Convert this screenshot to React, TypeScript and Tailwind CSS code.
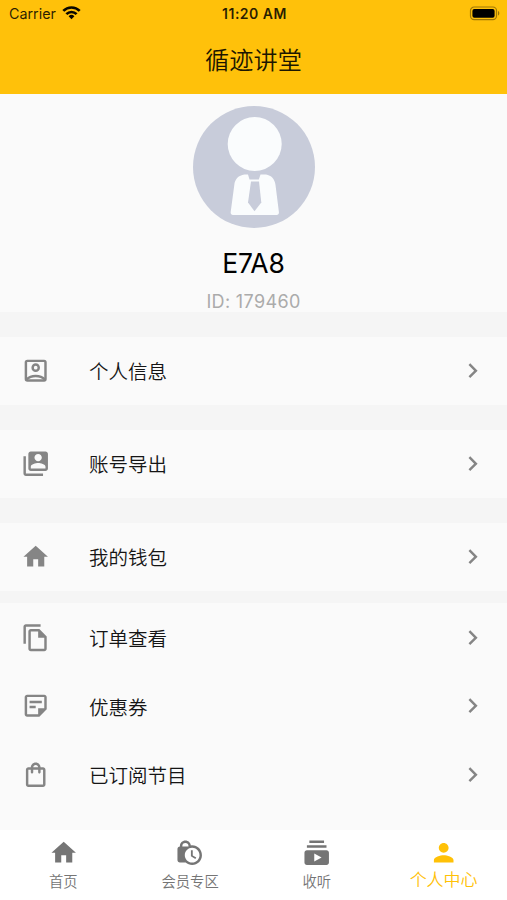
import type { ComponentType } from "react";
import {
  MdChevronRight,
  MdHome,
  MdLockClock,
  MdOutlineFileCopy,
  MdOutlineShoppingBag,
  MdOutlineStickyNote2,
  MdPerson,
  MdSubscriptions,
  MdSwitchAccount,
} from "react-icons/md";

type IconProps = { size?: number; color?: string };
type Item = { label: string; icon: ComponentType<IconProps> };

function ProfileBox({ size = 24, color = "currentColor" }: IconProps) {
  return (
    <svg width={size} height={size} viewBox="0 0 24 24" fill="none" stroke={color} strokeWidth="2">
      <rect x="4" y="4" width="16" height="16" rx="1.2" />
      <circle cx="12" cy="9.5" r="2.500" />
      <path d="M4.500 19.200C6.300 17.300 9 16.300 12 16.300s5.700 1 7.500 2.900" />
    </svg>
  );
}

const groups: { items: Item[]; gap: string }[] = [
  { gap: "h-[24.5px]", items: [{ label: "个人信息", icon: ProfileBox }] },
  { gap: "h-[24.5px]", items: [{ label: "账号导出", icon: MdSwitchAccount }] },
  { gap: "h-[24.5px]", items: [{ label: "我的钱包", icon: MdHome }] },
  {
    gap: "h-[12px]",
    items: [
      { label: "订单查看", icon: MdOutlineFileCopy },
      { label: "优惠券", icon: MdOutlineStickyNote2 },
      { label: "已订阅节目", icon: MdOutlineShoppingBag },
    ],
  },
];

const tabs: Item[] = [
  { label: "首页", icon: MdHome },
  { label: "会员专区", icon: MdLockClock },
  { label: "收听", icon: MdSubscriptions },
  { label: "个人中心", icon: MdPerson },
];

function StatusBar() {
  return (
    <div className="grid h-[27px] grid-cols-[1fr_auto_1fr] items-center pl-[9px] pr-[7px] text-[14px] leading-none">
      <div className="flex items-center gap-[6px]">
        <span className="mt-px text-[14.3px] text-black/85">Carrier</span>
        <svg width="19" height="15" viewBox="0 0 19 15" className="-mt-[2px]" fill="none" stroke="#0a0800" strokeWidth="2.7">
          <path d="M1.3 5.9a11.6 11.6 0 0 1 16.4 0" />
          <path d="M4.4 9.1a7.2 7.2 0 0 1 10.2 0" />
          <path d="M9.5 14.2 6.6 11.3a4.1 4.1 0 0 1 5.8 0z" fill="#0a0800" stroke="none" />
        </svg>
      </div>
      <span className="text-center font-semibold tracking-[0.5px] text-black/85">11:20 AM</span>
      <svg width="31" height="15" viewBox="0 0 31 15" className="justify-self-end">
        <rect x="1.5" y="1" width="26" height="12.6" rx="3.6" fill="none" stroke="#000" strokeOpacity=".38" strokeWidth="1.2" />
        <rect x="3.4" y="2.9" width="22.2" height="8.8" rx="2" fill="#000" />
        <path d="M29 5v4.6c1.8-.7 1.8-3.9 0-4.6z" fill="#000" fillOpacity=".4" />
      </svg>
    </div>
  );
}

function Avatar() {
  return (
    <svg width="122" height="122" viewBox="0 0 122 122">
      <circle cx="61" cy="61" r="61" fill="#c8ccda" />
      <g fill="#fafcfd">
        <circle cx="61.7" cy="38" r="27" />
        <path d="M55 68.5H51.500c-6 .8-9.500 4.500-10.200 10.500L37.700 106c-.2 2 .6 3 2.300 3h43.600c1.700 0 2.500-1 2.300-3L82.500 79c-.7-6-4.200-9.700-9.500-10.500h-5.500l-1.700 5h-9.300z" />
      </g>
      <path d="M58 75.500h8l2.300 21-6.800 8.800-6.500-8.800z" fill="#c8ccda" />
    </svg>
  );
}

function Row({ label, icon: Icon }: Item) {
  return (
    <button className="flex h-[68.6px] w-full items-center bg-[#fafafa] pl-[20.6px] pr-[19.5px] text-left">
      <Icon size={29.4} color="#858585" />
      <span className="ml-[39px] flex-1 pt-[3px] text-[19.5px] font-[350] leading-[28px] text-[#151515]">{label}</span>
      <MdChevronRight size={29.4} color="#858585" />
    </button>
  );
}

export default function App() {
  return (
    <div className="flex h-[900px] w-[507px] flex-col overflow-hidden bg-[#fafafa] font-['Inter','Noto_Sans_CJK_SC',sans-serif]">
      <header className="h-[94px] bg-[#ffc10a]">
        <StatusBar />
        <h1 className="mt-[16px] text-center text-[24.2px] font-[350] leading-[36px] text-[#1c1600]">循迹讲堂</h1>
      </header>

      <section className="flex h-[218px] flex-col items-center pt-[12px]">
        <Avatar />
        <div className="mt-[18px] text-[26.5px] leading-[34px] text-black">E7A8</div>
        <div className="mt-[12px] text-[18px] leading-[20px] tracking-[0.35px] text-[#ababab]">ID: 179460</div>
      </section>

      <main className="flex-1">
        {groups.map((group) => (
          <section key={group.items[0].label}>
            <div className={`${group.gap} bg-[#f5f5f5]`} />
            {group.items.map((item) => (
              <Row key={item.label} {...item} />
            ))}
          </section>
        ))}
      </main>

      <nav className="grid h-[70px] shrink-0 grid-cols-4 bg-white">
        {tabs.map(({ label, icon: Icon }, i) => (
          <button
            key={label}
            className={`flex flex-col items-center pt-[8px] font-[350] ${i === 3 ? "text-[#ffc107]" : "text-[#757575]"}`}
          >
            <Icon size={29.4} />
            <span className={i === 3 ? "mt-px text-[17px] leading-[24px]" : "mt-[4px] text-[14.3px] leading-[22px]"}>{label}</span>
          </button>
        ))}
      </nav>
    </div>
  );
}
